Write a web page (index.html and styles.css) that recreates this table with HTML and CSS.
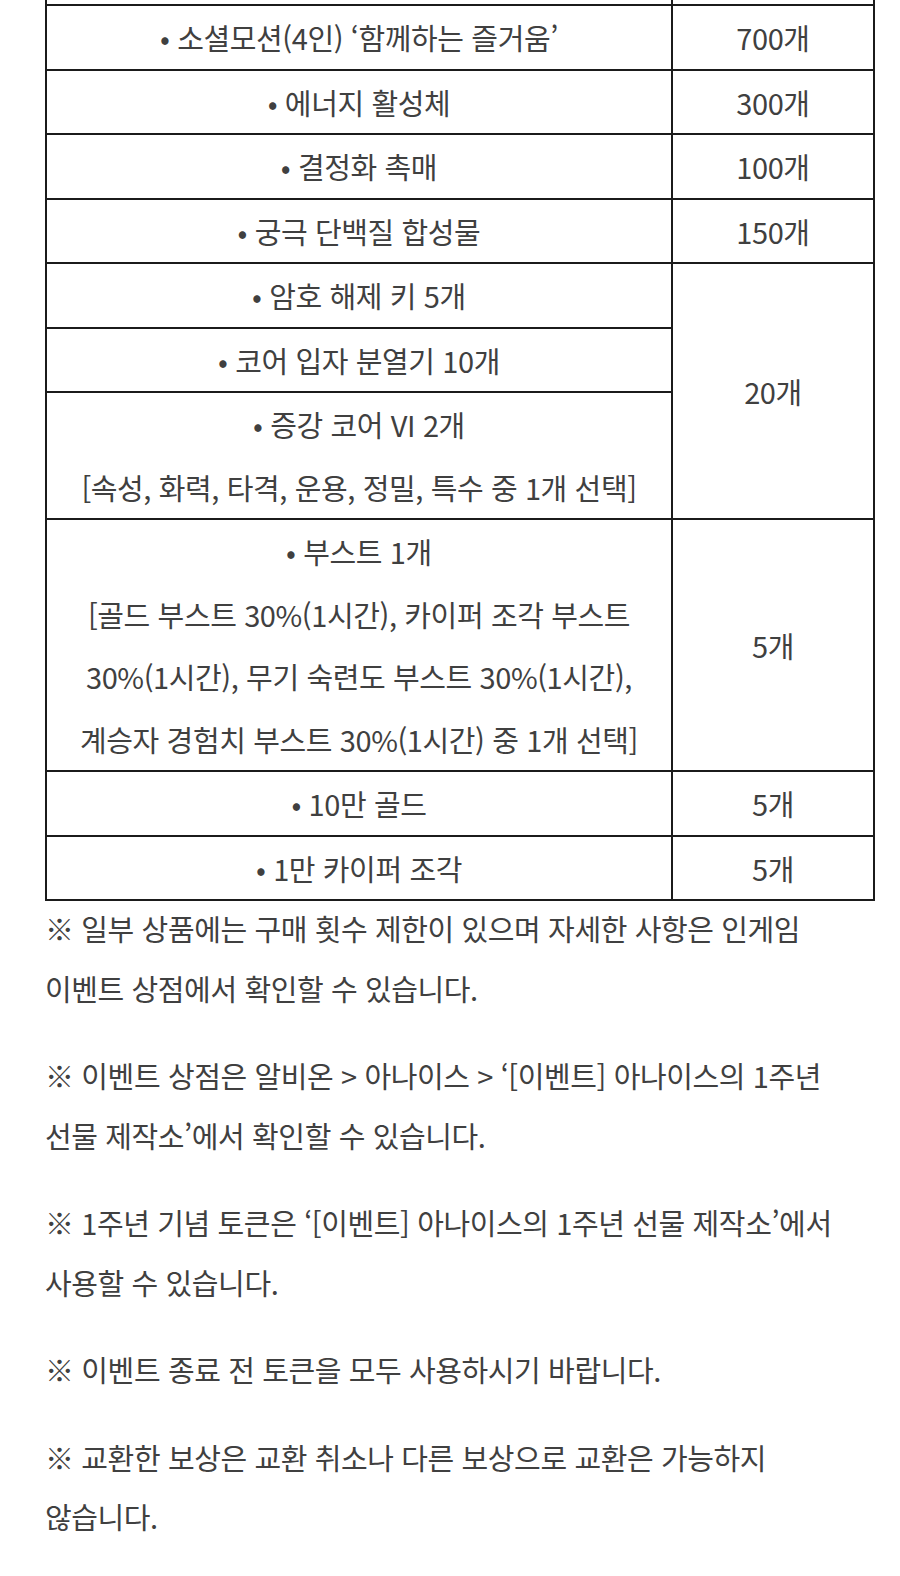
FILE: index.html
```html
<!DOCTYPE html>
<html lang="ko">
<head>
<meta charset="utf-8">
<title>이벤트 상점</title>
<link rel="stylesheet" href="styles.css">
</head>
<body>
<div class="wrap">
  <table class="shop">
    <colgroup>
      <col class="col-item">
      <col class="col-qty">
    </colgroup>
    <tbody>
      <tr class="cut"><td></td><td></td></tr>
      <tr><td>• 소셜모션(4인) ‘함께하는 즐거움’</td><td>700개</td></tr>
      <tr><td>• 에너지 활성체</td><td>300개</td></tr>
      <tr><td>• 결정화 촉매</td><td>100개</td></tr>
      <tr><td>• 궁극 단백질 합성물</td><td>150개</td></tr>
      <tr><td>• 암호 해제 키 5개</td><td rowspan="3">20개</td></tr>
      <tr><td>• 코어 입자 분열기 10개</td></tr>
      <tr><td>• 증강 코어 VI 2개<br>[속성, 화력, 타격, 운용, 정밀, 특수 중 1개 선택]</td></tr>
      <tr><td>• 부스트 1개<br>[골드 부스트 30%(1시간), 카이퍼 조각 부스트<br>30%(1시간), 무기 숙련도 부스트 30%(1시간),<br>계승자 경험치 부스트 30%(1시간) 중 1개 선택]</td><td>5개</td></tr>
      <tr><td>• 10만 골드</td><td>5개</td></tr>
      <tr><td>• 1만 카이퍼 조각</td><td>5개</td></tr>
    </tbody>
  </table>
  <div class="notes">
    <p>※ 일부 상품에는 구매 횟수 제한이 있으며 자세한 사항은 인게임 이벤트 상점에서 확인할 수 있습니다.</p>
    <p>※ 이벤트 상점은 알비온 &gt; 아나이스 &gt; ‘[이벤트] 아나이스의 1주년 선물 제작소’에서 확인할 수 있습니다.</p>
    <p>※ 1주년 기념 토큰은 ‘[이벤트] 아나이스의 1주년 선물 제작소’에서 사용할 수 있습니다.</p>
    <p>※ 이벤트 종료 전 토큰을 모두 사용하시기 바랍니다.</p>
    <p>※ 교환한 보상은 교환 취소나 다른 보상으로 교환은 가능하지 않습니다.</p>
  </div>
</div>
</body>
</html>
```
FILE: styles.css
```css
html, body {
  margin: 0;
  padding: 0;
  background: #fff;
}
body {
  font-family: "Noto Sans CJK KR", "Noto Sans", sans-serif;
  color: #404040;
  font-size: 29px;
  letter-spacing: -0.4px;
}
.wrap {
  padding: 0 25px 0 45px;
  overflow: hidden;
}
.shop {
  width: 100%;
  border-collapse: collapse;
  table-layout: fixed;
  margin-top: -3px;
}
.col-item { width: 75.6%; }
.col-qty { width: 24.4%; }
.shop td {
  border: 2px solid #1b1b1b;
  text-align: center;
  vertical-align: middle;
  line-height: 62.5px;
  padding: 0;
}
.shop tr.cut td {
  height: 5px;
  line-height: 5px;
}
.notes {
  margin-top: -2px;
}
.notes p {
  margin: 0 0 28px;
  line-height: 59.5px;
  word-break: keep-all;
}
```
